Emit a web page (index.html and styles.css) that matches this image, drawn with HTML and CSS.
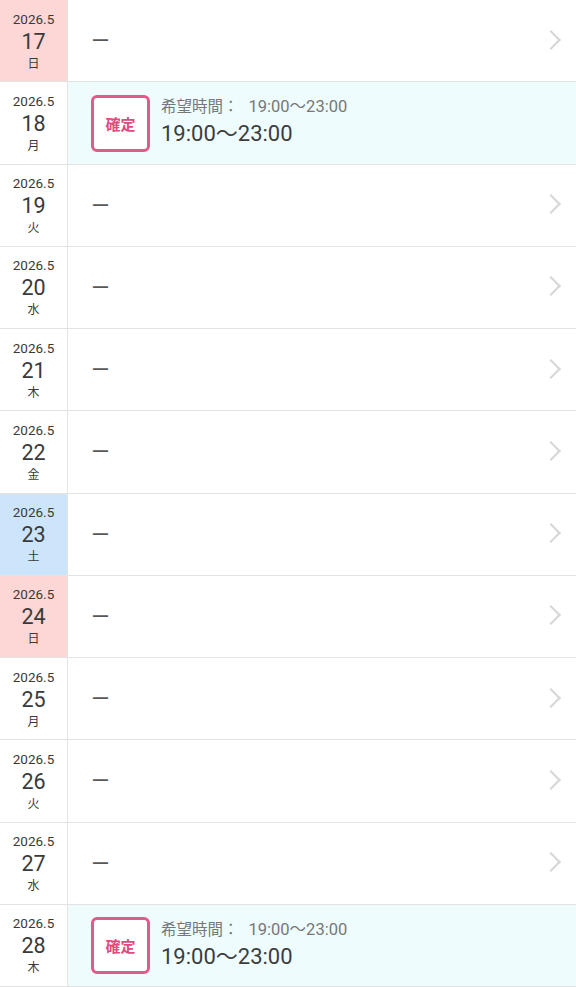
FILE: index.html
```html
<!DOCTYPE html>
<html lang="ja">
<head>
<meta charset="utf-8">
<link rel="stylesheet" href="styles.css">
</head>
<body>
<ul class="list">
  <li class="row"><div class="date sun"><span class="ym">2026.5</span><span class="d">17</span><span class="w">日</span></div><div class="body"><span class="dash">ー</span><span class="chev"></span></div></li>
  <li class="row fixed"><div class="date"><span class="ym">2026.5</span><span class="d">18</span><span class="w">月</span></div><div class="body"><span class="badge">確定</span><div class="times"><div class="hope">希望時間：<span class="hope-t">19:00〜23:00</span></div><div class="main">19:00〜23:00</div></div></div></li>
  <li class="row"><div class="date"><span class="ym">2026.5</span><span class="d">19</span><span class="w">火</span></div><div class="body"><span class="dash">ー</span><span class="chev"></span></div></li>
  <li class="row"><div class="date"><span class="ym">2026.5</span><span class="d">20</span><span class="w">水</span></div><div class="body"><span class="dash">ー</span><span class="chev"></span></div></li>
  <li class="row"><div class="date"><span class="ym">2026.5</span><span class="d">21</span><span class="w">木</span></div><div class="body"><span class="dash">ー</span><span class="chev"></span></div></li>
  <li class="row"><div class="date"><span class="ym">2026.5</span><span class="d">22</span><span class="w">金</span></div><div class="body"><span class="dash">ー</span><span class="chev"></span></div></li>
  <li class="row"><div class="date sat"><span class="ym">2026.5</span><span class="d">23</span><span class="w">土</span></div><div class="body"><span class="dash">ー</span><span class="chev"></span></div></li>
  <li class="row"><div class="date sun"><span class="ym">2026.5</span><span class="d">24</span><span class="w">日</span></div><div class="body"><span class="dash">ー</span><span class="chev"></span></div></li>
  <li class="row"><div class="date"><span class="ym">2026.5</span><span class="d">25</span><span class="w">月</span></div><div class="body"><span class="dash">ー</span><span class="chev"></span></div></li>
  <li class="row"><div class="date"><span class="ym">2026.5</span><span class="d">26</span><span class="w">火</span></div><div class="body"><span class="dash">ー</span><span class="chev"></span></div></li>
  <li class="row"><div class="date"><span class="ym">2026.5</span><span class="d">27</span><span class="w">水</span></div><div class="body"><span class="dash">ー</span><span class="chev"></span></div></li>
  <li class="row fixed"><div class="date"><span class="ym">2026.5</span><span class="d">28</span><span class="w">木</span></div><div class="body"><span class="badge">確定</span><div class="times"><div class="hope">希望時間：<span class="hope-t">19:00〜23:00</span></div><div class="main">19:00〜23:00</div></div></div></li>
</ul>
</body>
</html>
```
FILE: styles.css
```css
* { box-sizing: border-box; }
html, body { margin: 0; padding: 0; background: #fff; }
body {
  font-family: Roboto, "Noto Sans CJK JP", sans-serif;
  color: #333;
  width: 576px;
  overflow: hidden;
}
.list { list-style: none; margin: 0; padding: 0; }
.row {
  display: flex;
  height: 82.25px;
  border-bottom: 1px solid #e3e3e3;
  background: #fff;
}
.row.fixed .body { background: #eefcfe; }
.date {
  width: 68px;
  flex: none;
  border-right: 1px solid #e3e3e3;
  display: flex;
  flex-direction: column;
  align-items: center;
  justify-content: center;
  color: #3a3a3a;
}
.date.sun { background: #fdd6d6; }
.date.sat { background: #cde5fb; }
.ym { font-size: 13.5px; line-height: 20px; }
.d { font-size: 21.5px; line-height: 26px; }
.w { font-size: 12px; line-height: 18px; }
.body {
  flex: 1;
  display: flex;
  align-items: center;
  padding-left: 23px;
  position: relative;
}
.dash { color: #585858; font-size: 19px; margin-top: -2px; }
.chev {
  position: absolute;
  right: 18px;
  top: 50%;
  width: 14px;
  height: 14px;
  margin-top: -8px;
  border-top: 2px solid #d6d6d6;
  border-right: 2px solid #d6d6d6;
  transform: rotate(45deg);
}
.badge {
  width: 59px;
  height: 57px;
  border: 3px solid #e5588a;
  border-radius: 6px;
  color: #e04a7c;
  font-weight: bold;
  font-size: 15px;
  display: flex;
  align-items: center;
  justify-content: center;
  margin-right: 11px;
  margin-top: 1px;
  background: #fff;
}
.times { display: flex; flex-direction: column; }
.hope { color: #777; font-size: 15.5px; line-height: 21px; }
.hope-t { font-size: 16.5px; margin-left: 10px; }
.main { color: #3d3d3d; font-size: 22px; line-height: 31px; }
```
